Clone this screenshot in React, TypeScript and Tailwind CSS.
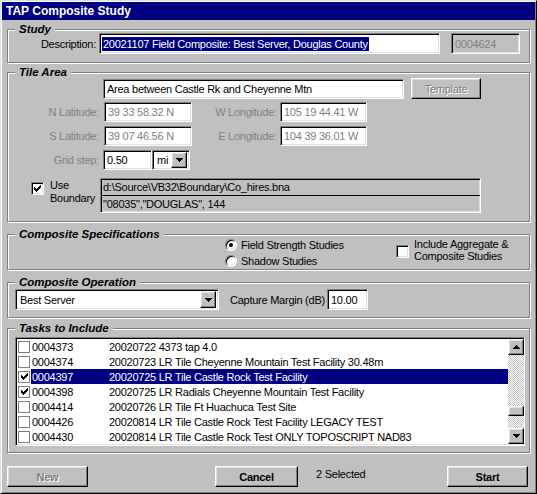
import React from 'react'

const sunken =
  'border border-t-[#808080] border-l-[#808080] border-r-white border-b-white shadow-[inset_1px_1px_0_#000,inset_-1px_-1px_0_#dfdfdf]'
const raised =
  'border border-t-white border-l-white border-r-black border-b-black shadow-[inset_-1px_-1px_0_#808080,inset_1px_1px_0_#dfdfdf]'
const etched = 'border border-[#808080] shadow-[inset_1px_1px_0_#fff,1px_1px_0_#fff]'
const disabledText = 'text-[#808080] [text-shadow:1px_1px_0_#fff]'
const checker = '[background:repeating-conic-gradient(#c0c0c0_0_25%,#fff_0_50%)_0_0/2px_2px]'

const tasks = [
  { id: '0004373', desc: '20020722 4373 tap 4.0', checked: false, selected: false },
  { id: '0004374', desc: '20020723 LR Tile Cheyenne Mountain Test Facility 30.48m', checked: false, selected: false },
  { id: '0004397', desc: '20020725 LR Tile Castle Rock Test Facility', checked: true, selected: true },
  { id: '0004398', desc: '20020725 LR Radials Cheyenne Mountain Test Facility', checked: true, selected: false },
  { id: '0004414', desc: '20020726 LR Tile Ft Huachuca Test Site', checked: false, selected: false },
  { id: '0004426', desc: '20020814 LR Tile Castle Rock Test Facility LEGACY TEST', checked: false, selected: false },
  { id: '0004430', desc: '20020814 LR Tile Castle Rock Test ONLY TOPOSCRIPT NAD83', checked: false, selected: false },
]

const CheckMark = () => (
  <svg width="7" height="7" viewBox="0 0 7 7" shapeRendering="crispEdges">
    <path
      d="M6 0h1v1h-1z M5 1h2v1h-2z M0 2h1v1h-1z M4 2h3v1h-3z M0 3h2v1h-2z M3 3h3v1h-3z M0 4h5v1h-5z M1 5h3v1h-3z M2 6h1v1h-1z"
      fill="#000"
    />
  </svg>
)

const DownArrow = () => (
  <svg width="7" height="4" viewBox="0 0 7 4" shapeRendering="crispEdges">
    <path d="M0 0h7v1h-7z M1 1h5v1h-5z M2 2h3v1h-3z M3 3h1v1h-1z" fill="#000" />
  </svg>
)

const UpArrow = () => (
  <svg width="7" height="4" viewBox="0 0 7 4" shapeRendering="crispEdges">
    <path d="M3 0h1v1h-1z M2 1h3v1h-3z M1 2h5v1h-5z M0 3h7v1h-7z" fill="#000" />
  </svg>
)

const Checkbox = ({ checked }: { checked: boolean }) => (
  <div className={`w-[13px] h-[13px] shrink-0 bg-white flex items-center justify-center ${sunken}`}>
    {checked && <CheckMark />}
  </div>
)

const Radio = ({ checked }: { checked: boolean }) => (
  <div
    className={`w-[12px] h-[12px] shrink-0 rounded-full bg-white flex items-center justify-center border border-t-[#808080] border-l-[#808080] border-r-white border-b-white shadow-[inset_1px_1px_0_#000,inset_-1px_-1px_0_#dfdfdf]`}
  >
    {checked && <div className="w-[4px] h-[4px] rounded-full bg-black" />}
  </div>
)

const GroupBox = ({ title, className, children }: { title: string; className: string; children?: React.ReactNode }) => (
  <div className={`relative ${etched} ${className}`}>
    <span className="absolute left-[7px] -top-[8px] px-[4px] bg-[#c0c0c0] font-bold italic text-[11.5px] leading-[14px] tracking-normal">
      {title}
    </span>
    {children}
  </div>
)

const Field = ({ value, className }: { value: string; className: string }) => (
  <div className={`h-[20px] flex items-center px-[3px] whitespace-nowrap overflow-hidden ${sunken} ${className}`}>{value}</div>
)

const App = () => {
  return (
    <div className="w-[537px] h-[494px] bg-[#c0c0c0] border border-t-[#dfdfdf] border-l-[#dfdfdf] border-r-black border-b-black shadow-[inset_1px_1px_0_#fff,inset_-1px_-1px_0_#808080] p-[1px] font-['Liberation_Sans',Arial,sans-serif] text-[11px] leading-[14px] tracking-[-0.25px] text-black select-none flex flex-col">
      <div className="h-[18px] shrink-0 bg-[#000080] text-white font-bold text-[12px] tracking-normal flex items-center pl-[4px]">
        TAP Composite Study
      </div>

      <div className="px-[5px] flex flex-col">
        <GroupBox title="Study" className="mt-[9px] h-[34px]">
          <div className="flex items-center mt-[3px]">
            <div className="w-[88px] text-right">Description:</div>
            <div className={`ml-[3px] w-[341px] h-[21px] bg-white flex items-center px-[2px] whitespace-nowrap ${sunken}`}>
              <span className="bg-[#000080] text-white px-[1px]">20021107 Field Composite: Best Server, Douglas County</span>
            </div>
            <Field value="0004624" className="ml-[11px] w-[69px] h-[21px] text-[#808080]" />
          </div>
        </GroupBox>

        <GroupBox title="Tile Area" className="mt-[9px] h-[150px]">
          <div className="flex items-center mt-[5px] pl-[95px]">
            <Field value="Area between Castle Rk and Cheyenne Mtn" className="w-[301px] bg-white" />
            <div className={`ml-[7px] w-[70px] h-[21px] flex items-center justify-center ${raised} ${disabledText}`}>
              Template
            </div>
          </div>

          <div className="flex items-center mt-[3px]">
            <div className="w-[91px] text-right text-[#808080]">N Latitude:</div>
            <Field value="39 33 58.32 N" className="ml-[5px] w-[88px] bg-white text-[#808080]" />
            <div className="w-[85px] text-right text-[#808080]">W Longitude:</div>
            <Field value="105 19 44.41 W" className="ml-[3px] w-[87px] bg-white text-[#808080]" />
          </div>

          <div className="flex items-center mt-[4px]">
            <div className="w-[91px] text-right text-[#808080]">S Latitude:</div>
            <Field value="39 07 46.56 N" className="ml-[5px] w-[88px] bg-white text-[#808080]" />
            <div className="w-[85px] text-right text-[#808080]">E Longitude:</div>
            <Field value="104 39 36.01 W" className="ml-[3px] w-[87px] bg-white text-[#808080]" />
          </div>

          <div className="flex items-center mt-[4px]">
            <div className="w-[91px] text-right text-[#808080]">Grid step:</div>
            <Field value="0.50" className="ml-[4px] w-[49px] bg-white" />
            <div className={`w-[38px] h-[20px] bg-white flex items-center p-[2px] ${sunken}`}>
              <span className="flex-1 pl-[2px]">mi</span>
              <div className={`w-[16px] h-[16px] bg-[#c0c0c0] flex items-center justify-center ${raised}`}>
                <DownArrow />
              </div>
            </div>
          </div>

          <div className="flex items-start mt-[8px]">
            <div className="w-[92px] flex items-start pl-[23px]">
              <div className="mt-[4px]">
                <Checkbox checked={true} />
              </div>
              <div className="ml-[6px] mt-[1px] leading-[13px]">
                Use
                <br />
                Boundary
              </div>
            </div>
            <div className={`w-[381px] flex flex-col ${sunken}`}>
              <div className="h-[16px] flex items-center px-[2px] whitespace-nowrap">
                d:\Source\VB32\Boundary\Co_hires.bna
              </div>
              <div className="h-[17px] flex items-center px-[2px] whitespace-nowrap border-t border-black">
                "08035","DOUGLAS", 144
              </div>
            </div>
          </div>
        </GroupBox>

        <GroupBox title="Composite Specifications" className="mt-[12px] h-[36px]">
          <div className="flex items-start">
            <div className="ml-[217px] w-[171px] pt-[2px] flex flex-col leading-[16px]">
              <div className="flex items-center">
                <Radio checked={true} />
                <span className="ml-[4px]">Field Strength Studies</span>
              </div>
              <div className="flex items-center">
                <Radio checked={false} />
                <span className="ml-[4px]">Shadow Studies</span>
              </div>
            </div>
            <div className="flex items-start">
              <div className="mt-[10px]">
                <Checkbox checked={false} />
              </div>
              <div className="ml-[5px] pt-[3px] leading-[12px]">
                Include Aggregate &amp;
                <br />
                Composite Studies
              </div>
            </div>
          </div>
        </GroupBox>

        <GroupBox title="Composite Operation" className="mt-[12px] h-[36px]">
          <div className="flex items-center mt-[6px] ml-[7px]">
            <div className={`w-[204px] h-[21px] bg-white flex items-center p-[2px] ${sunken}`}>
              <span className="flex-1 pl-[2px]">Best Server</span>
              <div className={`w-[16px] h-[17px] bg-[#c0c0c0] flex items-center justify-center ${raised}`}>
                <DownArrow />
              </div>
            </div>
            <div className="ml-[11px] w-[97px] whitespace-nowrap">Capture Margin (dB)</div>
            <Field value="10.00" className="w-[41px] h-[21px] bg-white" />
          </div>
        </GroupBox>

        <GroupBox title="Tasks to Include" className="mt-[10px] h-[125px]">
          <div className={`mt-[8px] ml-[7px] w-[510px] h-[109px] bg-white flex ${sunken}`}>
            <div className="flex-1 flex flex-col pt-[1px]">
              {tasks.map((t) => (
                <div key={t.id} className="h-[15px] flex items-center">
                  <div className="w-[15px] flex items-center pl-[2px]">
                    <div className="w-[12px] h-[12px] border border-[#808080] bg-white flex items-center justify-center">
                      {t.checked && <CheckMark />}
                    </div>
                  </div>
                  <div
                    className={`flex-1 h-[15px] flex items-center whitespace-nowrap ${
                      t.selected ? 'bg-[#000080] text-white' : ''
                    }`}
                  >
                    <span className="w-[78px] pl-[1px]">{t.id}</span>
                    <span>{t.desc}</span>
                  </div>
                </div>
              ))}
            </div>
            <div className="w-[16px] flex flex-col py-[1px]">
              <div className={`h-[16px] shrink-0 bg-[#c0c0c0] flex items-center justify-center ${raised}`}>
                <UpArrow />
              </div>
              <div className={`flex-1 flex flex-col ${checker}`}>
                <div className="h-[51px]" />
                <div className={`h-[10px] bg-[#c0c0c0] ${raised}`} />
              </div>
              <div className={`h-[16px] shrink-0 bg-[#c0c0c0] flex items-center justify-center ${raised}`}>
                <DownArrow />
              </div>
            </div>
          </div>
        </GroupBox>

        <div className="flex items-start mt-[13px]">
          <div className={`w-[81px] h-[21px] flex items-center justify-center font-bold ${raised} ${disabledText}`}>
            New
          </div>
          <div className={`ml-[127px] w-[83px] h-[21px] flex items-center justify-center font-bold ${raised}`}>
            Cancel
          </div>
          <div className="ml-[18px] w-[131px] pt-[1px]">2 Selected</div>
          <div className={`w-[81px] h-[21px] flex items-center justify-center font-bold ${raised}`}>Start</div>
        </div>
      </div>
    </div>
  )
}

export default App
